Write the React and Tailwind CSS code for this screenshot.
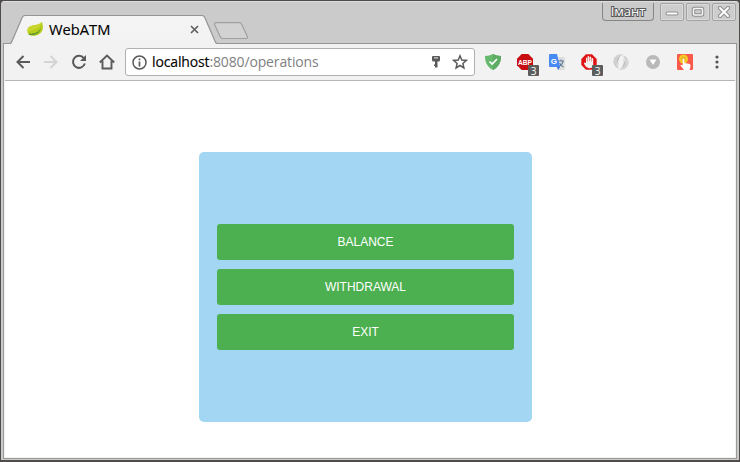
import React from "react";

function TabStrip() {
  return (
    <svg className="absolute left-0 top-0" width="738" height="43" viewBox="1 1 738 43" fill="none">
      <defs>
        <linearGradient id="tab" x1="0" y1="0" x2="0" y2="1">
          <stop offset="0" stopColor="#f4f4f4" />
          <stop offset="1" stopColor="#f2f2f2" />
        </linearGradient>
      </defs>
      <path d="M11 44 L22.2 17.5 Q23 15.5 25 15.5 H202 Q204 15.5 204.8 17.5 L216 43.5 V44Z" fill="url(#tab)" />
      <path d="M3 43.5 H9.5 Q11 43.5 11.6 42 L22.2 17.5 Q23 15.5 25 15.5 H202 Q204 15.5 204.8 17.5 L215.4 42 Q216 43.5 217.5 43.5 H737" stroke="#959595" strokeWidth="1.2" />
      <path d="M216 22.7 H239 Q241 22.7 241.8 24.5 L247.3 36.5 Q248 38.5 246 38.5 H223 Q221 38.5 220.2 36.7 L214.7 24.7 Q214 22.7 216 22.7Z" fill="#d2d2d2" stroke="#a0a0a0" strokeWidth="1.2" />
    </svg>
  );
}

function LeafIcon() {
  return (
    <svg width="16" height="16" viewBox="0 0 16 16">
      <path d="M15 .7C16.4 5.8 16.7 10.5 12 13.3 8.200 15.500 3.500 15 1.500 13.500-1 9 .5 5.500 5.500 4.500 9.500 3.700 12.500 3.800 15 .7Z" fill="#b8cc1c" />
      <path d="M15 .7C13.800 6 10 8.500 3 9.800L1 12C-.5 8 1.500 5.300 5.500 4.500 9.500 3.700 12.500 3.800 15 .7Z" fill="#c9d62c" />
      <path d="M1.500 12.700C7.500 13 12.200 11.200 14 6.500 13.500 11.500 9 14.700 2.500 13.900Z" fill="#58923a" />
    </svg>
  );
}

function WindowButton({ children }) {
  return (
    <div className="flex h-[18px] w-6 items-center justify-center rounded-[2px] border border-[#a3a3a3] bg-[#cdcdcd] shadow-[inset_0_0_0_1px_#dadada]">
      <svg width="14" height="12" viewBox="0 0 14 12" fill="none" strokeLinecap="round">{children}</svg>
    </div>
  );
}

function TitleBar() {
  return (
    <header className="relative flex h-[43px] shrink-0 bg-[#cbcbcb] shadow-[inset_0_1px_0_#dedede]">
      <TabStrip />
      <div className="relative ml-[26px] mt-[14px] flex h-7 w-[174px] items-center">
        <LeafIcon />
        <span className="ml-[6px] text-[14.7px] leading-none text-black [-webkit-text-stroke:0.15px_#000]">WebATM</span>
        <svg className="ml-auto mr-[2px]" width="9" height="9" viewBox="0 0 9 9" stroke="#606060" strokeWidth="1.7">
          <path d="M1 1 8 8M8 1 1 8" />
        </svg>
      </div>
      <div className="relative ml-auto mr-[3px] mt-[2px] flex h-[18px] items-start">
        <div className="mr-[6px] flex h-[18px] w-[52px] items-center justify-center rounded-b-[4px] border border-t-0 border-[#858585] bg-[#cacaca] text-[13px] leading-none text-white [-webkit-text-stroke:2px_#555] [paint-order:stroke_fill]">
          Імант
        </div>
        <div className="flex gap-[2px]">
          <WindowButton>
            <path d="M2.500 7.500H11.500" stroke="#8f8f8f" strokeWidth="4" />
            <path d="M2.500 7.500H11.500" stroke="#fff" strokeWidth="2" />
          </WindowButton>
          <WindowButton>
            <rect x="2.500" y="2.500" width="9" height="6.500" rx="1" stroke="#8f8f8f" strokeWidth="3.500" />
            <rect x="2.500" y="2.500" width="9" height="6.500" rx="1" stroke="#f5f5f5" strokeWidth="1.500" />
          </WindowButton>
          <WindowButton>
            <path d="M3 2 11 10M11 2 3 10" stroke="#8f8f8f" strokeWidth="4" />
            <path d="M3 2 11 10M11 2 3 10" stroke="#fff" strokeWidth="2" />
          </WindowButton>
        </div>
      </div>
    </header>
  );
}

function ArrowIcon({ forward }) {
  return (
    <svg width="16" height="16" viewBox="0 0 16 16" fill="none" strokeWidth="2" stroke={forward ? "#d4d4d4" : "#5a5a5a"}>
      {forward ? <path d="M1 8H13M7.500 2 13.500 8 7.500 14" /> : <path d="M15 8H3M8.500 2 2.500 8 8.500 14" />}
    </svg>
  );
}

function AddressBar() {
  return (
    <div className="ml-[10px] flex h-7 w-[350px] items-center rounded-[3px] border border-[#b0b0b0] bg-white pl-[6px]">
      <svg width="15" height="15" viewBox="0 0 15 15" fill="none" stroke="#5a5a5a">
        <circle cx="7.500" cy="7.500" r="6.500" strokeWidth="1.500" />
        <path d="M7.500 6.500V11.500M7.500 3.500V5.200" strokeWidth="1.700" />
      </svg>
      <span className="ml-[5px] whitespace-nowrap text-[14px] leading-none tracking-[-0.14px] text-[#808080]">
        <span className="text-black [-webkit-text-stroke:0.15px_#000]">localhost</span>:8080/operations
      </span>
      <svg className="ml-auto" width="10" height="14" viewBox="0 0 10 14" fill="#5a5a5a">
        <path d="M2 1H8Q9 1 9 2V5Q9 6.500 7.500 6.500H6.500V12.500H4V11H3V9.500H4V6.500H2.500Q1 6.500 1 5V2Q1 1 2 1Z" />
        <path d="M3 2.900H7" stroke="#fff" strokeWidth=".9" />
      </svg>
      <svg className="ml-[11px] mr-[6px]" width="16" height="16" viewBox="0 0 16 16" fill="none" stroke="#5a5a5a" strokeWidth="1.500">
        <path d="M8 1.800 9.800 6 14.300 6.400 10.900 9.400 11.900 13.900 8 11.500 4.100 13.900 5.100 9.400 1.700 6.400 6.200 6Z" />
      </svg>
    </div>
  );
}

function Badge() {
  return (
    <span className="absolute left-[11px] top-[11px] flex h-[11px] w-[11px] items-center justify-center rounded-[1px] bg-[#5d5d5d] text-[10px] leading-none text-white">3</span>
  );
}

function Extensions() {
  return (
    <div className="ml-[10px] flex items-center gap-4">
      <svg width="16" height="16" viewBox="0 0 16 16">
        <path d="M8 0C10.500 1.300 13 1.900 16 2.100 16.200 8 13.500 13.300 8 16 2.500 13.300-.2 8 0 2.100 3 1.900 5.500 1.300 8 0Z" fill="#67b96d" />
        <path d="M8 0C10.500 1.300 13 1.900 16 2.100 16.200 8 13.500 13.300 8 16Z" fill="#5eab64" />
        <path d="M4.500 7.500 7.200 10 12 5" fill="none" stroke="#fff" strokeWidth="1.700" />
      </svg>
      <div className="relative h-4 w-4">
        <svg className="overflow-visible" width="16" height="16" viewBox="0 0 16 16">
          <path d="M4.700 0H11.300L16 4.700V11.300L11.300 16H4.700L0 11.300V4.700Z" fill="#c70d12" />
          <text x="1" y="10.800" fontSize="8" fontWeight="700" fontFamily="Liberation Sans" textLength="14" lengthAdjust="spacingAndGlyphs" fill="#fff">ABP</text>
        </svg>
        <Badge />
      </div>
      <svg width="16" height="16" viewBox="0 0 16 16">
        <path d="M6 3H15Q16 3 16 4V15Q16 16 15 16H9Z" fill="#dedede" />
        <path d="M9 7H15M12 5.500V7M14 7C13.500 10 11 12 9.500 12.500M10.500 9C11.500 11 13 12.500 14.500 13" fill="none" stroke="#607d9b" strokeWidth="1.200" />
        <path d="M1 0H8L11 13H1Q0 13 0 12V1Q0 0 1 0Z" fill="#4889f4" />
        <path d="M8 13H11L9 16Z" fill="#3367d6" />
        <text x="1.700" y="9.500" fontSize="8" fontWeight="700" fontFamily="Liberation Sans" fill="#fff">G</text>
      </svg>
      <div className="relative h-4 w-4">
        <svg width="16" height="16" viewBox="0 0 16 16">
          <path d="M5 .3H11L15.700 5V11L11 15.700H5L.3 11V5Z" fill="#e01414" />
          <path d="M5 4Q5.600 3.200 6.200 4V7.500H6.600V2.500Q7.400 1.500 8.200 2.500V7H8.600V3Q9.400 2 10.200 3V7.500H10.600V4.500Q11.500 3.600 12.200 4.500V11Q11.700 14.300 8.600 14.300 5.600 14.200 3.600 10.800L2.900 9Q3.900 8 5 9.200Z" fill="#f4f0f0" />
        </svg>
        <Badge />
      </div>
      <svg width="16" height="16" viewBox="0 0 16 16">
        <path d="M10 .5C4-.8-.5 4 .5 9 1.200 12.500 3.500 14.500 6.500 14.500 3 11 3 4 10 .5Z" fill="#d0d0d0" />
        <path d="M10 .5C5.500 3 4 7.500 6 11.500 4.500 9.500 3.500 7 4.500 4.500Z" fill="#b5b5b5" />
        <path d="M6 15.500C12 16.800 16.500 12 15.500 7 14.800 3.500 12.500 1.500 9.500 1.500 13 5 13 12 6 15.500Z" fill="#d4d4d4" />
        <path d="M6 15.500C10.500 13 12 8.500 10 4.500 11.500 6.500 12.500 9 11.500 11.500Z" fill="#b5b5b5" />
      </svg>
      <svg width="16" height="16" viewBox="0 0 16 16">
        <circle cx="8" cy="8" r="7" fill="#b9b9b9" />
        <path d="M4.500 5.500H11.500L8 11Z" fill="#fff" />
      </svg>
      <svg width="16" height="16" viewBox="0 0 16 16">
        <rect width="16" height="16" rx="1" fill="#f9594a" />
        <circle cx="6.500" cy="5" r="4.500" fill="#f5cc27" />
        <circle cx="6.500" cy="5" r="2.500" fill="#eeb22c" />
        <path d="M5.700 5Q6.500 4 7.300 5V9L12 9.800Q14 10.200 13.500 12.500L12.500 16H7L3.500 11.500Q3.500 10 5.700 11.500Z" fill="#fff" />
      </svg>
    </div>
  );
}

function Toolbar() {
  return (
    <nav className="flex h-9 shrink-0 items-center bg-[#f2f2f2] pl-[11px]">
      <div className="flex items-center gap-3">
        <ArrowIcon />
        <ArrowIcon forward />
        <svg width="16" height="16" viewBox="0 0 16 16" fill="none">
          <path d="M12.800 4.200A6 6 0 1 0 13.800 9.500" stroke="#5a5a5a" strokeWidth="2" />
          <path d="M15 1V7H9Z" fill="#5a5a5a" />
        </svg>
        <svg width="16" height="16" viewBox="0 0 16 16" fill="none" stroke="#5a5a5a" strokeWidth="1.900">
          <path d="M.8 8.500 8 1.500 15.200 8.500M3.500 7V14.500H12.500V7" />
        </svg>
      </div>
      <AddressBar />
      <Extensions />
      <svg className="ml-[22px]" width="4" height="14" viewBox="0 0 4 14" fill="#555">
        <circle cx="2" cy="2" r="1.600" />
        <circle cx="2" cy="7" r="1.600" />
        <circle cx="2" cy="12" r="1.600" />
      </svg>
    </nav>
  );
}

export default function App() {
  return (
    <div className="h-[462px] w-[740px] bg-[#504b4b] p-px pb-[2px] font-['Open_Sans','Noto_Sans',sans-serif]">
      <div className="flex h-full flex-col overflow-hidden rounded-t-[4px] bg-[#cbcbcb]">
        <TitleBar />
        <div className="mx-[2px] mb-[1px] flex flex-1 flex-col border-x border-b border-[#999] bg-[#f2f2f2]">
          <Toolbar />
          <main className="mx-px mb-px flex flex-1 justify-center border-t border-[#b6b6b6] bg-white pt-[71px]">
            <div className="mr-[9px] flex h-[270px] w-[333px] flex-col justify-center gap-[9px] rounded-[5px] bg-[#a3d6f3] px-[18px]">
              {["BALANCE", "WITHDRAWAL", "EXIT"].map((label) => (
                <button key={label} className="h-9 rounded-[3px] bg-[#4caf50] font-['Liberation_Sans',Arial,sans-serif] text-[12px] text-white">
                  {label}
                </button>
              ))}
            </div>
          </main>
        </div>
      </div>
    </div>
  );
}
